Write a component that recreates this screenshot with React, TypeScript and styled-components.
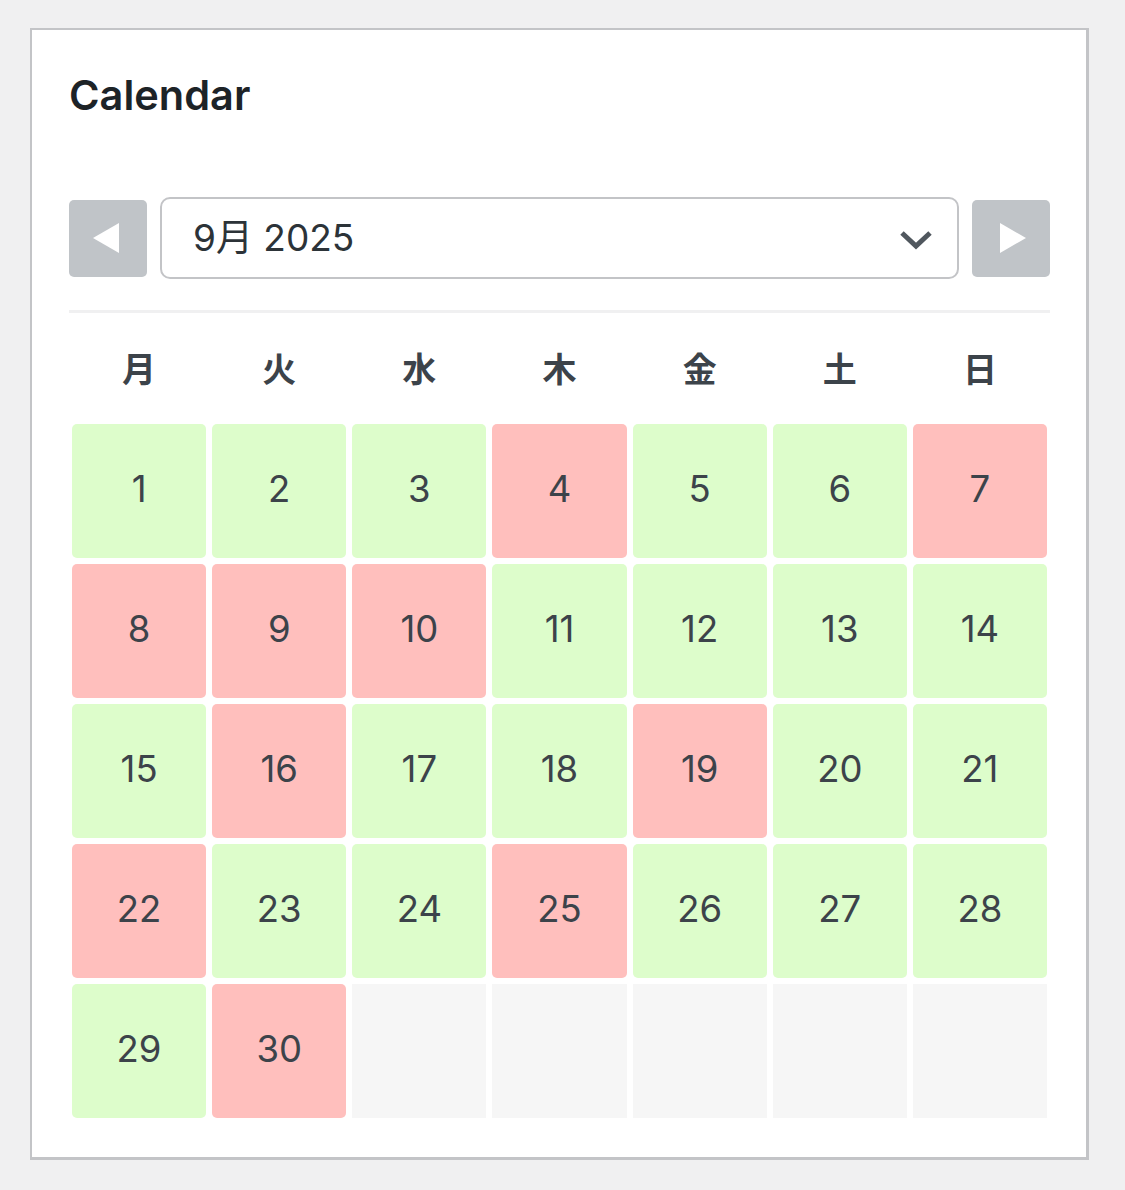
import React from "react";
import styled, { createGlobalStyle } from "styled-components";

const Global = createGlobalStyle`
  html, body { margin: 0; padding: 0; background: #f0f0f1; }
  body { font-family: "Inter", "Noto Sans CJK JP", sans-serif; }
  * { box-sizing: border-box; }
`;

const Page = styled.div`
  padding: 28px 0 30px 30px;
`;

const Panel = styled.section`
  width: 1059px;
  background: #ffffff;
  border-style: solid;
  border-color: #c3c4c7;
  border-width: 2px 3px 3px 2px;
  padding: 41px 36px 36px 37px;
`;

const Title = styled.h2`
  margin: 0;
  font-family: "Inter", sans-serif;
  font-size: 41.5px;
  line-height: 48px;
  font-weight: 600;
  color: #1d2327;
`;

const Nav = styled.div`
  display: flex;
  align-items: center;
  gap: 13px;
  margin-top: 78px;
  height: 82px;
`;

const ArrowButton = styled.button<{ $dir: "left" | "right" }>`
  flex: 0 0 78px;
  height: 77px;
  border: none;
  border-radius: 5px;
  background: #c0c4c8;
  display: flex;
  align-items: center;
  justify-content: center;
  padding: 0;
  padding-right: ${(p) => (p.$dir === "left" ? "4px" : "0")};
  padding-left: ${(p) => (p.$dir === "right" ? "4px" : "0")};
  cursor: pointer;
`;

const Select = styled.div`
  flex: 1;
  height: 82px;
  border: 2.5px solid #c3c4c7;
  border-radius: 10px;
  display: flex;
  align-items: center;
  justify-content: space-between;
  padding: 0 24px 0 31px;
  color: #2c3338;
`;

const SelectLabel = styled.span`
  font-size: 37px;
  margin-bottom: 6px;
  font-family: "Inter", "Noto Sans CJK JP", sans-serif;
`;

const Divider = styled.hr`
  margin: 31px 0 0;
  border: none;
  height: 3px;
  background: #f0f0f1;
`;

const WeekRow = styled.div`
  display: grid;
  grid-template-columns: repeat(7, 1fr);
  height: 108px;
`;

const WeekDay = styled.div`
  display: flex;
  align-items: center;
  justify-content: center;
  font-size: 34px;
  font-weight: 700;
  color: #3c434a;
  font-family: "Noto Sans CJK JP", sans-serif;
`;

const Grid = styled.div`
  display: grid;
  grid-template-columns: repeat(7, 1fr);
  gap: 6px;
  padding: 3px;
`;

const Day = styled.div<{ $state: "open" | "closed" | "empty" }>`
  height: 134px;
  display: flex;
  align-items: center;
  justify-content: center;
  padding-bottom: 4px;
  font-size: 36.5px;
  color: #3c434a;
  border-radius: ${(p) => (p.$state === "empty" ? "0" : "5px")};
  background: ${(p) =>
    p.$state === "open" ? "#ddfdcb" : p.$state === "closed" ? "#ffbfbd" : "#f6f6f6"};
`;

const closed = new Set([4, 7, 8, 9, 10, 16, 19, 22, 25, 30]);
const weekdays = ["月", "火", "水", "木", "金", "土", "日"];

const Tri = ({ dir }: { dir: "left" | "right" }) => (
  <svg width="26" height="30" viewBox="0 0 26 30">
    {dir === "left" ? (
      <polygon points="26,0 26,30 0,15" fill="#ffffff" />
    ) : (
      <polygon points="0,0 0,30 26,15" fill="#ffffff" />
    )}
  </svg>
);

export default function App() {
  const days: Array<number | null> = [];
  for (let i = 1; i <= 30; i++) days.push(i);
  for (let i = 0; i < 5; i++) days.push(null);
  return (
    <>
      <Global />
      <Page>
        <Panel>
          <Title>Calendar</Title>
          <Nav>
            <ArrowButton $dir="left" aria-label="前の月">
              <Tri dir="left" />
            </ArrowButton>
            <Select>
              <SelectLabel>9月 2025</SelectLabel>
              <svg width="34" height="22" viewBox="0 0 34 22" style={{ marginTop: 3 }}>
                <polyline
                  points="3,4 17,17 31,4"
                  fill="none"
                  stroke="#50575e"
                  strokeWidth="5"
                />
              </svg>
            </Select>
            <ArrowButton $dir="right" aria-label="次の月">
              <Tri dir="right" />
            </ArrowButton>
          </Nav>
          <Divider />
          <WeekRow>
            {weekdays.map((w) => (
              <WeekDay key={w}>{w}</WeekDay>
            ))}
          </WeekRow>
          <Grid>
            {days.map((d, i) => (
              <Day
                key={i}
                $state={d === null ? "empty" : closed.has(d) ? "closed" : "open"}
              >
                {d}
              </Day>
            ))}
          </Grid>
        </Panel>
      </Page>
    </>
  );
}
